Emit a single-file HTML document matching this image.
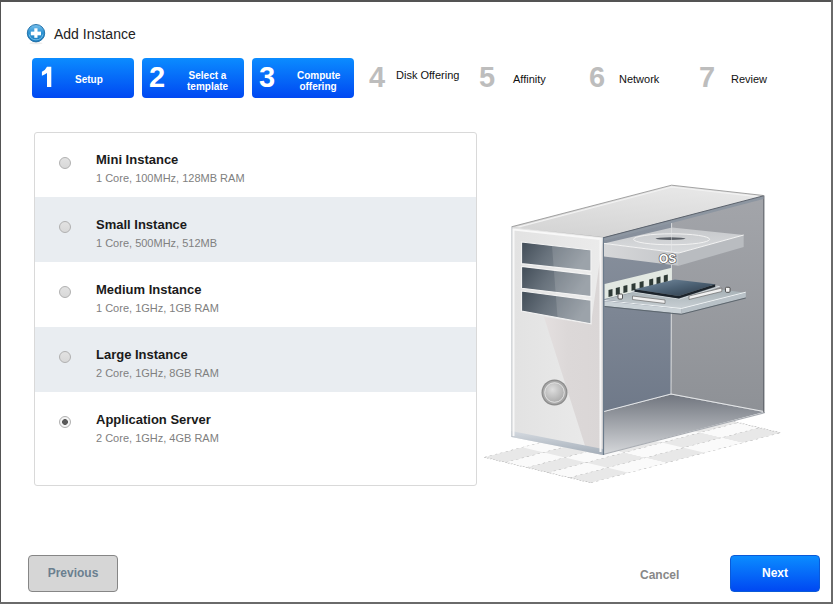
<!DOCTYPE html>
<html><head><meta charset="utf-8">
<style>
*{margin:0;padding:0;box-sizing:border-box}
html,body{width:833px;height:604px;overflow:hidden;background:#545454}
body{position:relative;font-family:"Liberation Sans",sans-serif}
#frame{position:absolute;left:1px;top:2px;width:830px;height:600px;background:#fff}
.abs{position:absolute}
#title{position:absolute;left:54px;top:26px;font-size:14px;color:#222;line-height:16px;white-space:nowrap}
.step{position:absolute;top:58px;width:102px;height:40px;border-radius:4px;color:#fff;font-weight:bold}
.step.on{background:linear-gradient(#0b8cff,#0048f2)}
.num{position:absolute;font-size:29px;font-weight:bold;line-height:30px;}
.lbl{position:absolute;font-size:10px;line-height:11px;text-align:center;white-space:nowrap}
.step.off .num{color:#bdbdbd}
.step.off .lbl{color:#111;font-weight:normal;font-size:11px}
#list{position:absolute;left:34px;top:132px;width:443px;height:354px;border:1px solid #d9d9d9;border-radius:3px;overflow:hidden}
.row{position:absolute;left:0;width:441px;height:65px}
.row.alt{background:#e9edf1}
.d1 .rt,.d1 .rs{margin-top:1px}
.radio{position:absolute;left:24px;top:23.5px;width:12px;height:12px;border-radius:50%;border:1px solid #b0b0b0;background:linear-gradient(#e2e2e2,#d8d8d8)}
.radio.sel{background:radial-gradient(circle,#5a5a5a 0,#5a5a5a 2.6px,#f4f4f4 3.2px,#f4f4f4 100%)}
.rt{position:absolute;left:61px;top:19px;font-size:13px;font-weight:bold;color:#1a1a1a;white-space:nowrap;line-height:15px}
.rs{position:absolute;left:61px;top:39px;font-size:11px;color:#808080;white-space:nowrap;line-height:13px}
.btn{position:absolute;top:555px;width:90px;height:37px;border-radius:4px;font-size:12px;font-weight:bold;text-align:center;line-height:35px}
#prev{left:28px;background:#d6d6d6;border:1px solid #868686;color:#6b7f8f}
#next{left:730px;background:linear-gradient(#0b8cff,#0048f2);color:#fff;border:1px solid #0a5ad8}
#cancel{position:absolute;left:640px;top:567px;font-size:12px;font-weight:bold;color:#888;line-height:16px}
</style></head><body>
<div id="frame"></div><div class="abs" style="left:831px;top:0;width:2px;height:604px;background:#6a6a6a"></div><div class="abs" style="left:0;top:602px;width:833px;height:2px;background:#6a6a6a"></div>
<svg class="abs" style="left:25px;top:22px" width="22" height="24" viewBox="0 0 22 24">
  <defs><linearGradient id="ig" x1="0" y1="0" x2="0" y2="1"><stop offset="0" stop-color="#7cc2ee"/><stop offset="0.45" stop-color="#2f95d4"/><stop offset="1" stop-color="#1c7cbd"/></linearGradient></defs>
  <ellipse cx="11" cy="21.3" rx="6.5" ry="1" fill="#ececec"/>
  <circle cx="11" cy="11.2" r="8.7" fill="url(#ig)" stroke="#1a6aa3" stroke-width="0.9"/>
  <path d="M4.2 12.5 A7 7 0 0 0 17.8 12.5" fill="none" stroke="#8ed2f6" stroke-width="0.9" opacity="0.8"/>
  <rect x="5.8" y="9.6" width="10.2" height="3.7" fill="#fff"/>
  <rect x="9.3" y="6.3" width="3.2" height="9.5" fill="#fff"/>
</svg>
<div id="title">Add Instance</div>

<div class="step on" style="left:32px"><svg class="abs" style="left:0;top:0" width="60" height="40" viewBox="32 58 60 40"><path d="M47 66.7H51.3V87.1H47V73Q44.6 74.9 41.9 75.7V71.7Q45.2 70.4 47 66.7Z" fill="#fff"/></svg><div class="lbl" style="left:43px;top:16px;width:26px">Setup</div></div>
<div class="step on" style="left:142px"><div class="num" style="left:7px;top:4px">2</div><div class="lbl" style="left:45px;top:12px;width:41px">Select a<br>template</div></div>
<div class="step on" style="left:252px"><div class="num" style="left:7px;top:4px">3</div><div class="lbl" style="left:45px;top:12px;width:42px">Compute<br>offering</div></div>
<div class="step off" style="left:362px"><div class="num" style="left:7px;top:4px">4</div><div class="lbl" style="left:34px;top:12px">Disk Offering</div></div>
<div class="step off" style="left:472px"><div class="num" style="left:7px;top:4px">5</div><div class="lbl" style="left:41px;top:16px">Affinity</div></div>
<div class="step off" style="left:582px"><div class="num" style="left:7px;top:4px">6</div><div class="lbl" style="left:37px;top:16px">Network</div></div>
<div class="step off" style="left:692px"><div class="num" style="left:7px;top:4px">7</div><div class="lbl" style="left:39px;top:16px">Review</div></div>

<div id="list">
  <div class="row" style="top:0"><div class="radio"></div><div class="rt">Mini Instance</div><div class="rs">1 Core, 100MHz, 128MB RAM</div></div>
  <div class="row alt d1" style="top:64px"><div class="radio"></div><div class="rt">Small Instance</div><div class="rs">1 Core, 500MHz, 512MB</div></div>
  <div class="row d1" style="top:129px"><div class="radio"></div><div class="rt">Medium Instance</div><div class="rs">1 Core, 1GHz, 1GB RAM</div></div>
  <div class="row alt d1" style="top:194px"><div class="radio"></div><div class="rt">Large Instance</div><div class="rs">2 Core, 1GHz, 8GB RAM</div></div>
  <div class="row d1" style="top:259px"><div class="radio sel"></div><div class="rt">Application Server</div><div class="rs">2 Core, 1GHz, 4GB RAM</div></div>
</div>

<!--ART--><svg class="abs" style="left:0;top:0" width="833" height="604" viewBox="0 0 833 604">
<defs>
  <linearGradient id="gTop" x1="0" y1="1" x2="0.3" y2="0"><stop offset="0" stop-color="#d2d2d2"/><stop offset="1" stop-color="#e6e6e6"/></linearGradient>
  <linearGradient id="gFront" x1="0" y1="0" x2="1" y2="0"><stop offset="0" stop-color="#e2e2e2"/><stop offset="1" stop-color="#ebebeb"/></linearGradient>
  <linearGradient id="gLW" x1="0" y1="0" x2="0" y2="1"><stop offset="0" stop-color="#8a929e"/><stop offset="1" stop-color="#6f7989"/></linearGradient>
  <linearGradient id="gBW" x1="0" y1="0" x2="0" y2="1"><stop offset="0" stop-color="#a3a5aa"/><stop offset="1" stop-color="#8e9196"/></linearGradient>
  <linearGradient id="gFloor" x1="0" y1="0" x2="0" y2="1"><stop offset="0" stop-color="#70757e"/><stop offset="1" stop-color="#d6d8db"/></linearGradient>
  <linearGradient id="gBay" x1="0" y1="0" x2="1" y2="0.3"><stop offset="0" stop-color="#414c57"/><stop offset="0.45" stop-color="#68727c"/><stop offset="1" stop-color="#8e969e"/></linearGradient>
  <linearGradient id="gDrvTop" x1="0" y1="0" x2="0" y2="1"><stop offset="0" stop-color="#c6c8cb"/><stop offset="1" stop-color="#dadcde"/></linearGradient>
  <linearGradient id="gDrvF" x1="0" y1="0" x2="1" y2="0"><stop offset="0" stop-color="#d6d7d9"/><stop offset="1" stop-color="#c4c6c9"/></linearGradient>
  <linearGradient id="gCpu" x1="0" y1="0" x2="1" y2="1"><stop offset="0" stop-color="#7a90a4"/><stop offset="0.5" stop-color="#4d6275"/><stop offset="1" stop-color="#2a3744"/></linearGradient>
  <linearGradient id="gTray" x1="0" y1="0" x2="0" y2="1"><stop offset="0" stop-color="#9aa6ac"/><stop offset="1" stop-color="#c9d0d4"/></linearGradient>
  <linearGradient id="gBot" x1="0" y1="0" x2="0" y2="1"><stop offset="0" stop-color="#d5dae0"/><stop offset="1" stop-color="#a3adb8"/></linearGradient>
  <linearGradient id="gPink" x1="0" y1="0" x2="1" y2="0"><stop offset="0" stop-color="#e4dfdf"/><stop offset="0.4" stop-color="#dcd8d8"/><stop offset="1" stop-color="#dad6d6"/></linearGradient>
  <radialGradient id="gBtn" cx="0.4" cy="0.35" r="0.75"><stop offset="0" stop-color="#dedede"/><stop offset="1" stop-color="#a6a6a6"/></radialGradient>
  <pattern id="pChk" width="2" height="2" patternUnits="userSpaceOnUse">
    <rect width="2" height="2" fill="#fafafa"/>
    <rect width="1" height="1" fill="#e8e8e8"/><rect x="1" y="1" width="1" height="1" fill="#e8e8e8"/>
  </pattern>
</defs>
<!-- floor grid -->
<g transform="matrix(21.3 5.1 38 -10 484.3 457.3)">
  <rect x="0" y="0" width="5" height="5" fill="url(#pChk)"/>
  <g stroke="#b0b0b0" stroke-width="0.045" stroke-dasharray="0.06 0.08" fill="none">
    <path d="M0 0V5M1 0V5M2 0V5M3 0V5M4 0V5M5 0V5M0 0H5M0 5H5"/>
  </g>
</g>
<!-- interior walls -->
<polygon points="603,237 671.6,219 671,394.5 603,412" fill="url(#gLW)"/>
<polygon points="671.6,219 763.5,196 764,412 671,394.5" fill="url(#gBW)"/>
<polygon points="603,412 671,394.5 764,412 603,454.5" fill="url(#gFloor)"/>
<line x1="671.6" y1="219" x2="671" y2="394.5" stroke="#d8dadc" stroke-width="1"/>
<polyline points="604,411.5 671,394 764,411.5" fill="none" stroke="#e6e8ea" stroke-width="1"/>
<line x1="603" y1="454.5" x2="765" y2="412.5" stroke="#a9adb3" stroke-width="1.2"/>
<line x1="763.8" y1="195.5" x2="763.8" y2="412.5" stroke="#5d6168" stroke-width="1.2"/>
<!-- top face -->
<polygon points="511.5,226.8 671.6,185.2 763.5,195.5 603,237.5" fill="url(#gTop)"/>
<polyline points="511.5,226.8 671.6,185.2 763.5,195.5" fill="none" stroke="#8e8e8e" stroke-width="0.8"/>
<polyline points="516,227.6 671.6,187 758,196.6" fill="none" stroke="#f2f2f2" stroke-width="1.2"/>
<polygon points="603,238 763.5,196 763.5,199 603,241" fill="#8d96a1"/>
<line x1="603" y1="237.8" x2="763.5" y2="195.8" stroke="#5c636d" stroke-width="1"/>
<polyline points="512,227.5 603,237.5" fill="none" stroke="#a8a8a8" stroke-width="0.8"/>
<!-- front face -->
<polygon points="511.5,227 603,237.5 603,455 511.5,437" fill="url(#gFront)"/>
<polygon points="544,317 591,324 603,238 603,455 587,452" fill="url(#gPink)"/>
<polygon points="511.5,431 603,449 603,455 511.5,437" fill="url(#gBot)"/>
<line x1="512" y1="227" x2="512" y2="437" stroke="#b9bec4" stroke-width="1"/>
<polyline points="513.5,436 513.5,229.5 600,239" fill="none" stroke="#f8f8f8" stroke-width="2"/>
<line x1="603.5" y1="237.5" x2="603.5" y2="455" stroke="#6b7b8b" stroke-width="1.2"/>
<line x1="600.5" y1="238" x2="600.5" y2="452" stroke="#f6f6f6" stroke-width="2"/>
<!-- bays -->
<g stroke="#f2f2f2" stroke-width="1.2">
<polygon points="521.5,242 591,250 591,271 521.5,263.7" fill="url(#gBay)"/>
<polygon points="521.5,266.4 591,274.6 591,296.5 521.5,288.3" fill="url(#gBay)"/>
<polygon points="521.5,291 591,300.1 591,323.8 521.5,311" fill="url(#gBay)"/>
</g>
<polygon points="552,246 591,251 591,323 557.5,317" fill="#ffffff" opacity="0.13"/>
<!-- power button -->
<circle cx="554.5" cy="392.5" r="13" fill="#8c8c8c"/>
<circle cx="554.5" cy="392.5" r="11.8" fill="#a8a8a8"/>
<circle cx="554.5" cy="392.5" r="9.8" fill="url(#gBtn)" stroke="#f0f0f0" stroke-width="0.8"/>
<!-- drive -->
<polygon points="604,243.4 672,227.5 743.7,235 678.8,253" fill="url(#gDrvTop)"/>
<polygon points="604,243.4 678.8,253 678.8,265.8 604,256.6" fill="url(#gDrvF)"/>
<polygon points="678.8,253 743.7,235 743.7,247 678.8,265.8" fill="#b9bcc0"/>
<polyline points="604,243.4 678.8,253 743.7,235" fill="none" stroke="#f4f4f4" stroke-width="1"/>
<ellipse cx="671.6" cy="239.3" rx="38" ry="5.5" fill="none" stroke="#f2f2f2" stroke-width="1"/>
<ellipse cx="670.5" cy="238.6" rx="15" ry="1.3" fill="#5a5f66"/>
<line x1="671.6" y1="228" x2="671.6" y2="251" stroke="#eceeef" stroke-width="0.8" opacity="0.6"/>
<text x="659" y="263" font-family="Liberation Sans" font-weight="bold" font-size="12" fill="#fff" stroke="#4a4a4a" stroke-width="1.2" paint-order="stroke">OS</text>
<!-- motherboard tray -->
<polygon points="604.6,284 671.8,267.7 671.8,283 604.6,299" fill="#e2e8e2"/>
<g fill="#2e3a36">
<polygon points="608.5,290 612.5,289 612.5,296 608.5,297"/>
<polygon points="615.8,288 619.8,287 619.8,294 615.8,295"/>
<polygon points="623.4,286 627.4,285 627.4,292 623.4,293"/>
<polygon points="631.5,284 635.5,283 635.5,290 631.5,291"/>
<polygon points="639.6,282 643.6,281 643.6,288 639.6,289"/>
<polygon points="649.2,279.5 653.2,278.5 653.2,285.5 649.2,286.5"/>
<polygon points="656.5,277.5 660.5,276.5 660.5,283.5 656.5,284.5"/>
<polygon points="663.8,275.5 667.8,274.5 667.8,281.5 663.8,282.5"/>
</g>
<polygon points="604.6,299.5 671.8,283 745.8,292.7 681.4,309" fill="url(#gTray)"/>
<polygon points="604.6,301.3 681.4,309 681.4,313.8 604.6,306" fill="#c9d1d6"/><line x1="604.6" y1="306.5" x2="681.4" y2="314.3" stroke="#5c666e" stroke-width="1"/>
<polygon points="681.4,309 745.8,292.7 745.8,297.5 681.4,313.8" fill="#b8c1c7"/><line x1="681.4" y1="314.3" x2="745.8" y2="298" stroke="#5c666e" stroke-width="1"/>
<polyline points="604.6,300.5 681.4,308.5 745.8,292.2" fill="none" stroke="#eef2f4" stroke-width="1"/>
<polygon points="631,291.5 675,281.5 719.5,286.5 679.5,299" fill="#8e979e" stroke="#e8ecee" stroke-width="0.7"/>
<polygon points="634.5,289.2 674.8,279.5 715.2,284.3 678.7,295.9" fill="url(#gCpu)"/>
<polygon points="634.5,289.2 678.7,295.9 715.2,284.3 715.2,286.8 678.7,298.4 634.5,291.7" fill="#1c242c"/>
<polygon points="632.5,296 665,300 665,303.5 632.5,299.5" fill="#f0f0f0" stroke="#6a6a6a" stroke-width="0.7"/>
<polygon points="689,296 721.8,288 721.8,291.5 689,299.5" fill="#f0f0f0" stroke="#6a6a6a" stroke-width="0.7"/>
<rect x="618" y="294" width="4.5" height="5" rx="1" fill="#f4f4f4" stroke="#333" stroke-width="0.8"/>
<rect x="725.5" y="287.3" width="4.5" height="5" rx="1" fill="#f4f4f4" stroke="#333" stroke-width="0.8"/>
</svg>
<!--/ART-->


<div class="btn" id="prev">Previous</div>
<div id="cancel">Cancel</div>
<div class="btn" id="next">Next</div>
</body></html>
